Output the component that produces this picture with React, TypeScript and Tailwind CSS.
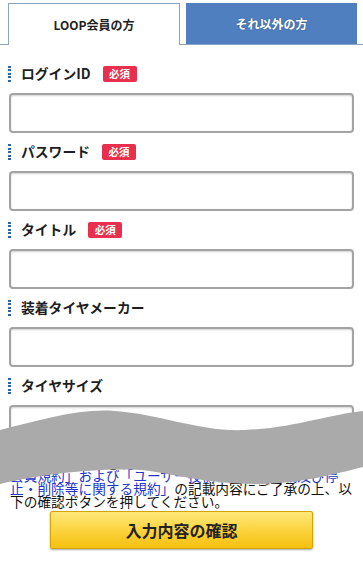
import React from "react";

const Marker = () => (
  <span className="block w-[3px] h-[16px] bg-[repeating-linear-gradient(to_bottom,#2f63ad_0_2px,#ffffff_2px_3.5px)]" />
);

const Badge = () => (
  <span className="ml-3 inline-flex items-center justify-center w-[34px] h-[16px] rounded-[2px] bg-[#e8304e] text-white text-[10.5px] font-bold leading-none">
    必須
  </span>
);

const Field = ({ label, required }: { label: string; required?: boolean }) => (
  <div className="mb-[11px]">
    <div className="flex items-center h-[16px] pl-[8px]">
      <Marker />
      <span className="ml-[10px] text-[13.8px] font-bold text-[#1e1e1e] leading-none">{label}</span>
      {required && <Badge />}
    </div>
    <div className="mt-[11px] mx-[9px] h-[40px] rounded-[4px] border-2 border-[#a3a3a3] bg-white shadow-[inset_0_1px_2px_rgba(0,0,0,0.18)]" />
  </div>
);

export default function App() {
  return (
    <div className="relative w-[363px] h-[565px] overflow-hidden bg-white font-['Noto_Sans_CJK_JP',sans-serif]">
      <div className="flex items-end pt-[3px] pl-[8px] gap-[6px] border-b border-[#8ca2bf]">
        <div className="w-[172px] h-[42px] -mb-px flex items-center justify-center bg-white border border-b-0 border-[#8ca2bf] text-[12px] font-bold text-[#222]">
          LOOP会員の方
        </div>
        <div className="w-[171px] h-[41px] flex items-center justify-center bg-[#4f7fbf] text-[12px] font-bold text-white [text-shadow:0_0_2px_rgba(0,0,0,0.35)]">
          それ以外の方
        </div>
      </div>
      <div className="pt-[21px]">
        <Field label="ログインID" required />
        <Field label="パスワード" required />
        <Field label="タイトル" required />
        <Field label="装着タイヤメーカー" />
        <Field label="タイヤサイズ" />
      </div>
      <p className="pl-[10px] text-[13.7px] leading-[13px] text-[#111] whitespace-nowrap">
        ご投稿の前に、必ず<span className="text-[#2233cc]">「LOOP利用規約」「LOOP</span>
        <br />
        <span className="text-[#2233cc]">会員規約」および「ユーザー投稿データの掲載及び停</span>
        <br />
        <span className="text-[#2233cc]">止・削除等に関する規約」</span>の記載内容にご了承の上、以
        <br />
        下の確認ボタンを押してください。
      </p>
      <div className="mt-[3px] flex justify-center">
        <button className="w-[263px] h-[38px] rounded-[2px] border border-[#d4a300] bg-[linear-gradient(to_bottom,#ffe77a,#fbd23a_55%,#f5c010)] shadow-[0_1px_2px_rgba(0,0,0,0.35)] text-[16px] font-bold text-[#222]">
          入力内容の確認
        </button>
      </div>
      <svg
        className="absolute inset-0 pointer-events-none"
        width="363"
        height="565"
        viewBox="0 0 363 565"
      >
        <path
          d="M0,430 C40,420 80,408 115,411 C160,414 200,432 245,430 C295,428 330,414 363,411 L363,467 C335,474 300,484 255,484 C220,484 190,478 150,471 C110,466 40,474 0,484 Z"
          fill="#aaaaaa"
        />
      </svg>
    </div>
  );
}
